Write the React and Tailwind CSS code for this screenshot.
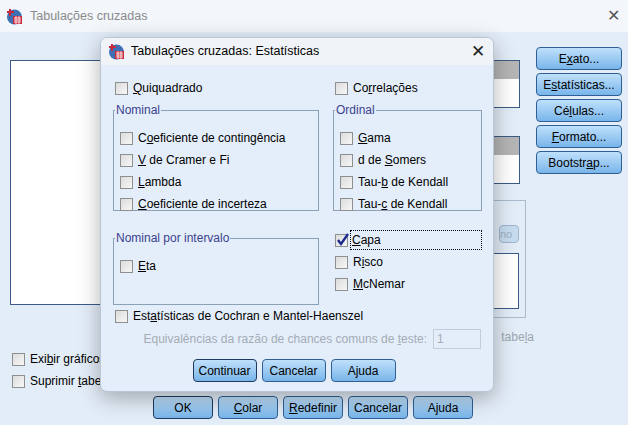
const U = ({ t, u }) => {
  const i = t.indexOf(u);
  if (i < 0) return t;
  return (
    <>
      {t.slice(0, i)}
      <span className="underline">{u}</span>
      {t.slice(i + u.length)}
    </>
  );
};

const Box = ({ checked }) => (
  <span className="w-[13px] h-[13px] border border-[#8e8f8f] bg-gradient-to-br from-[#dcdcdc] to-[#f7f7f7] flex items-center justify-center shrink-0 relative">
    {checked && (
      <svg width="14" height="14" viewBox="0 0 14 14" className="absolute -top-[2px] left-0">
        <path d="M2 7 L5 11 L12 1" stroke="#1b2a8c" strokeWidth="2.4" fill="none" />
      </svg>
    )}
  </span>
);

const Check = ({ t, u, checked, className = "" }) => (
  <div className={"flex items-center gap-[5px] h-[22px] " + className}>
    <Box checked={checked} />
    <span><U t={t} u={u} /></span>
  </div>
);

const Btn = ({ t, u, w = "w-[64px]", bold }) => (
  <button className={"h-[23px] " + w + " rounded-[4px] border " + (bold ? "border-[#1e3a5e] border-[1.5px]" : "border-[#2f5f95]") + " bg-gradient-to-b from-[#bfe0fb] to-[#78b5ea] text-[12px] text-black"}>
    <U t={t} u={u || ""} />
  </button>
);

const Icon = () => (
  <svg width="17" height="17" viewBox="0 0 17 17">
    <circle cx="8.5" cy="9" r="7.5" fill="#3d6fb5" />
    <rect x="7" y="8" width="9" height="8" fill="#c8283a" />
    <path d="M8 10h7M8 12h7M8 14h7M10 8v8M13 8v8" stroke="#fff" strokeWidth="0.8" />
    <path d="M4 1v7M1 4h7" stroke="#c8283a" strokeWidth="2" />
  </svg>
);

const Group = ({ title, className = "", children }) => (
  <fieldset className={"border border-[#8aa1b6] px-[6px] pt-[8px] pb-[4px] " + className}>
    <legend className="text-[#3b3f8f] px-[1px] -ml-[5px]">{title}</legend>
    {children}
  </fieldset>
);

export default function App() {
  return (
    <div className="w-[628px] h-[425px] relative overflow-hidden bg-[#e3edf8] text-[12px] text-black" style={{ fontFamily: "'Liberation Sans', Arial, sans-serif" }}>
      <div className="h-[32px] flex items-center px-[6px] gap-[7px] bg-[#f3f6fa]">
        <Icon />
        <span className="text-[#8a8a8a] text-[12.5px]">Tabulações cruzadas</span>
        <span className="ml-auto text-[#555] text-[16px] mr-[2px]">✕</span>
      </div>
      <div className="flex pt-[28px] pl-[10px]">
        <div className="w-[240px] h-[245px] bg-white border border-[#3b5b86]" />
        <div className="w-[270px] flex flex-col items-end">
          <div className="w-[120px] h-[48px] border border-[#3b5b86] bg-white"><div className="h-[18px] bg-[#b5b5b5]" /></div>
          <div className="w-[120px] h-[48px] border border-[#3b5b86] bg-white mt-[28px]"><div className="h-[18px] bg-[#b5b5b5]" /></div>
          <div className="w-[130px] h-[118px] border border-[#a9bccd] mt-[16px] mr-[-6px] flex flex-col items-end pr-[6px]">
            <div className="mt-[24px] w-[20px] h-[18px] rounded border border-[#9fb6cf] bg-[#c8dcf0] text-[#9fb0c2] text-[11px]">no</div>
            <div className="mt-[10px] w-[120px] h-[56px] border border-[#3b5b86] bg-white" />
          </div>
          <div className="text-[#9aa6b2] mt-[10px] mr-[-14px]">tabe<span className="underline">l</span>a</div>
        </div>
        <div className="ml-[16px] mt-[-13px] flex flex-col gap-[3px]">
          <Btn t="Exato..." u="x" w="w-[86px]" />
          <Btn t="Estatísticas..." u="s" w="w-[86px]" />
          <Btn t="Células..." u="l" w="w-[86px]" />
          <Btn t="Formato..." u="F" w="w-[86px]" />
          <Btn t="Bootstrap..." u="a" w="w-[86px]" />
        </div>
      </div>
      <div className="pl-[12px] mt-[2px]">
        <Check t="Exibir gráficos" u="b" />
        <Check t="Suprimir tabelas" u="t" />
      </div>
      <div className="flex gap-[5px] pl-[153px] mt-[4px]">
        <Btn t="OK" w="w-[60px]" bold />
        <Btn t="Colar" u="C" w="w-[60px]" />
        <Btn t="Redefinir" u="R" w="w-[60px]" />
        <Btn t="Cancelar" w="w-[60px]" />
        <Btn t="Ajuda" w="w-[60px]" />
      </div>

      <div className="absolute left-[100px] top-[37px] w-[394px] h-[355px] rounded-[7px] bg-[#e4eefa] border border-[#b8c6d6] shadow-[0_6px_22px_rgba(0,0,0,0.3)] overflow-hidden">
        <div className="h-[27px] bg-[#f0f4f9] flex items-center pl-[7px] gap-[6px]">
          <Icon />
          <span className="text-[12.5px]">Tabulações cruzadas: Estatísticas</span>
          <span className="ml-auto mr-[8px] text-[17px] text-[#222]">✕</span>
        </div>
        <div className="px-[12px] pt-[12px]">
          <div className="grid grid-cols-[206px_149px] gap-x-[14px]">
            <Check t="Quiquadrado" u="Q" className="pl-[2px]" />
            <Check t="Correlações" u="r" className="pl-[2px]" />
            <Group title="Nominal" className="h-[110px] mt-[2px]">
              <Check t="Coeficiente de contingência" u="o" />
              <Check t="V de Cramer e Fi" u="V" />
              <Check t="Lambda" u="L" />
              <Check t="Coeficiente de incerteza" u="C" />
            </Group>
            <Group title="Ordinal" className="h-[110px] mt-[2px]">
              <Check t="Gama" u="G" />
              <Check t="d de Somers" u="S" />
              <Check t="Tau-b de Kendall" u="b" />
              <Check t="Tau-c de Kendall" u="c" />
            </Group>
            <Group title="Nominal por intervalo" className="h-[76px] mt-[18px]">
              <Check t="Eta" u="E" />
            </Group>
            <div className="mt-[18px] pl-[2px]">
              <div className="flex items-center gap-[2px] h-[22px]">
                <Box checked />
                <span className="border border-dotted border-black flex-1 h-[20px] flex items-center pl-[1px]"><U t="Capa" u="C" /></span>
              </div>
              <Check t="Risco" u="i" />
              <Check t="McNemar" u="M" />
            </div>
          </div>
          <Check t="Estatísticas de Cochran e Mantel-Haenszel" u="a" className="pl-[2px] mt-[0px]" />
          <div className="flex items-center justify-end gap-[6px] h-[22px] mt-[1px] text-[#a3acb6]">
            <span>Equivalências da razão de chances comuns de <U t="teste:" u="t" /></span>
            <span className="w-[48px] h-[20px] border border-[#c3cdd7] pl-[3px] flex items-center">1</span>
          </div>
          <div className="flex justify-center gap-[5px] mt-[9px] mr-[6px]">
            <Btn t="Continuar" bold />
            <Btn t="Cancelar" />
            <Btn t="Ajuda" w="w-[65px]" />
          </div>
        </div>
      </div>
    </div>
  );
}
